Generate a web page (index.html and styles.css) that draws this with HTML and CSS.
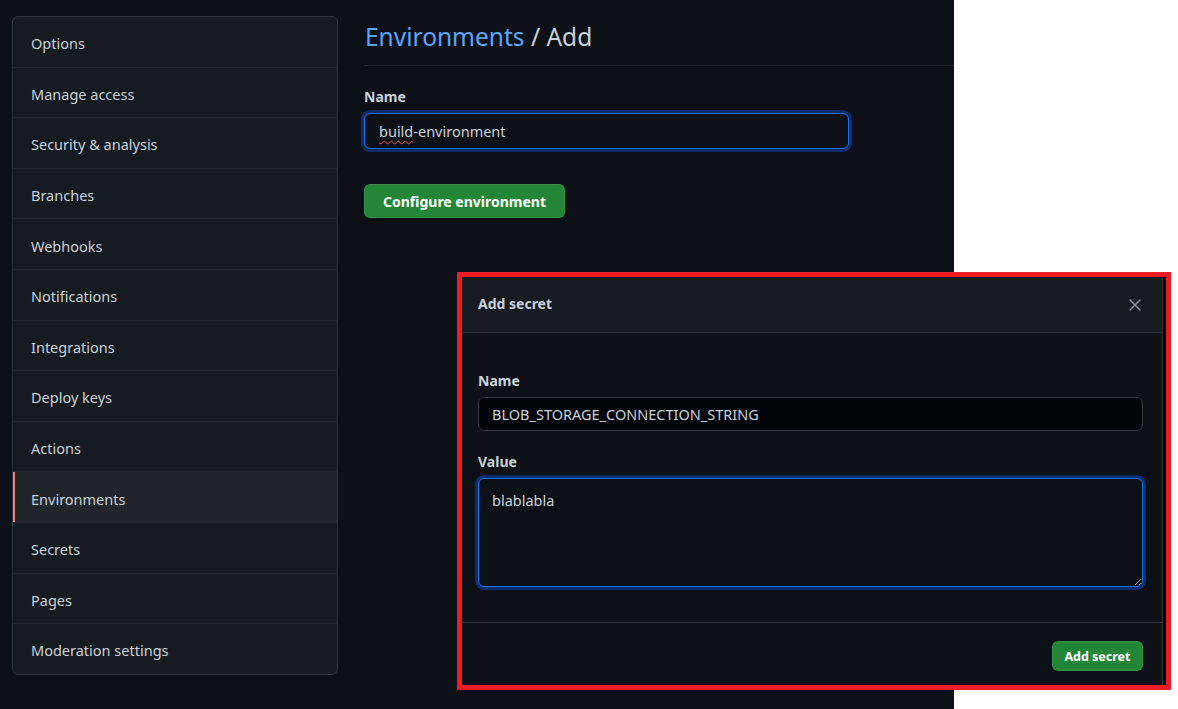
FILE: index.html
```html
<!DOCTYPE html>
<html lang="en">
<head>
<meta charset="utf-8">
<title>Environments / Add</title>
<link rel="stylesheet" href="styles.css">
</head>
<body>
<div class="page">
  <nav class="sidebar">
    <a class="menu-item">Options</a>
    <a class="menu-item">Manage access</a>
    <a class="menu-item">Security &amp; analysis</a>
    <a class="menu-item">Branches</a>
    <a class="menu-item">Webhooks</a>
    <a class="menu-item">Notifications</a>
    <a class="menu-item">Integrations</a>
    <a class="menu-item">Deploy keys</a>
    <a class="menu-item">Actions</a>
    <a class="menu-item selected">Environments</a>
    <a class="menu-item">Secrets</a>
    <a class="menu-item">Pages</a>
    <a class="menu-item">Moderation settings</a>
  </nav>
  <main class="main">
    <div class="subhead">
      <h2 class="subhead-title"><a class="crumb">Environments</a> / Add</h2>
    </div>
    <label class="field-label">Name</label>
    <div class="input focused"><span class="misspelled">build</span>-environment</div>
    <button class="btn-primary btn-large">Configure environment</button>
  </main>
</div>

<div class="highlight">
  <div class="dialog">
    <div class="dialog-header">
      <span class="dialog-title">Add secret</span>
      <svg class="close-icon" width="16" height="16" viewBox="0 0 16 16"><path d="M3 3L13 13M13 3L3 13" stroke="#8b949e" stroke-width="1.5" stroke-linecap="round" fill="none"/></svg>
    </div>
    <div class="dialog-body">
      <label class="field-label">Name</label>
      <div class="input dark">BLOB_STORAGE_CONNECTION_STRING</div>
      <label class="field-label second">Value</label>
      <textarea class="textarea focused">blablabla</textarea>
    </div>
    <div class="dialog-footer">
      <button class="btn-primary btn-small">Add secret</button>
    </div>
  </div>
</div>
</body>
</html>
```

FILE: styles.css
```css
* { box-sizing: border-box; }

body {
  margin: 0;
  background: #ffffff;
  font-family: "Noto Sans", "Liberation Sans", Arial, sans-serif;
  font-size: 14.5px;
  color: #c9d1d9;
  width: 1178px;
  height: 709px;
  overflow: hidden;
  position: relative;
}

.page {
  width: 954px;
  height: 709px;
  background: #0d1117;
  display: flex;
  align-items: flex-start;
  padding: 16px 0 0 12px;
}

.sidebar {
  width: 326px;
  flex: none;
  background: #161b22;
  border: 1px solid #30363d;
  border-radius: 6px;
  overflow: hidden;
  display: flex;
  flex-direction: column;
}

.menu-item {
  display: block;
  padding: 16.3px 18px 13.3px;
  line-height: 20px;
  color: #c9d1d9;
  border-bottom: 1px solid #21262d;
  position: relative;
}

.menu-item:last-child { border-bottom: 0; }

.menu-item.selected {
  background: #21262d;
}

.menu-item.selected::before {
  content: "";
  position: absolute;
  left: 0;
  top: 0;
  bottom: 0;
  width: 2px;
  background: #f78166;
}

.main {
  flex: 1;
  margin-left: 26px;
  display: flex;
  flex-direction: column;
  align-items: flex-start;
}

.subhead {
  align-self: stretch;
  padding: 3px 0 10px 1px;
  border-bottom: 1px solid #21262d;
}

.subhead-title {
  margin: 0;
  font-size: 24.5px;
  font-weight: 400;
  line-height: 36px;
  color: #c9d1d9;
}

.crumb { color: #58a6ff; }

.field-label {
  display: block;
  font-weight: 700;
  font-size: 14px;
  line-height: 21px;
  margin-top: 20px;
  color: #c9d1d9;
}

.input {
  margin-top: 6px;
  border: 1px solid #30363d;
  border-radius: 6px;
  background: #0d1117;
  color: #c9d1d9;
  line-height: 20px;
}

.main .input {
  width: 485px;
  height: 36px;
  padding: 7px 14px;
}

.focused {
  border-color: #1f6feb;
  box-shadow: 0 0 0 3px #0c2d6b;
  outline: none;
}

.misspelled {
  text-decoration: underline wavy #e5534b;
  text-decoration-thickness: 1px;
  text-underline-offset: 3px;
}

.btn-primary {
  font-family: inherit;
  font-weight: 700;
  color: #ffffff;
  background: #238636;
  border: 1px solid rgba(240, 246, 252, 0.1);
  border-radius: 6px;
  cursor: pointer;
}

.btn-large {
  margin-top: 35px;
  height: 34px;
  padding: 0 18px;
  font-size: 14px;
}

/* Dialog with red highlight frame */
.highlight {
  position: absolute;
  left: 457px;
  top: 272px;
  width: 714px;
  height: 418px;
  border: 5px solid #ed1c24;
  background: #010409;
}

.dialog {
  width: 701px;
  height: 100%;
  background: #0d1117;
  border-right: 1px solid #30363d;
  display: flex;
  flex-direction: column;
}

.dialog-header {
  height: 56px;
  flex: none;
  background: #161b22;
  border-bottom: 1px solid #30363d;
  display: flex;
  align-items: center;
  justify-content: space-between;
  padding: 0 19px 2px 16px;
}

.dialog-title {
  font-weight: 700;
  font-size: 14px;
  color: #c9d1d9;
}

.close-icon { display: block; margin-top: 2px; }

.dialog-body {
  padding: 17px 19px 0 16px;
  flex: none;
}

.input.dark {
  margin-top: 6px;
  height: 34px;
  padding: 6px 13px;
  background: #010409;
}

.textarea {
  display: block;
  width: 100%;
  height: 109px;
  margin-top: 6px;
  padding: 11px 13px;
  font-family: inherit;
  font-size: 14.5px;
  line-height: 20px;
  color: #c9d1d9;
  background: #0d1117;
  border-radius: 6px;
  border: 1px solid #1f6feb;
  resize: vertical;
}

.dialog-footer {
  flex: none;
  margin-top: 35px;
  border-top: 1px solid #30363d;
  display: flex;
  justify-content: flex-end;
  padding: 18px 19px 0 16px;
}

.btn-small {
  height: 30px;
  padding: 0 11.5px;
  font-size: 12.5px;
}
```
